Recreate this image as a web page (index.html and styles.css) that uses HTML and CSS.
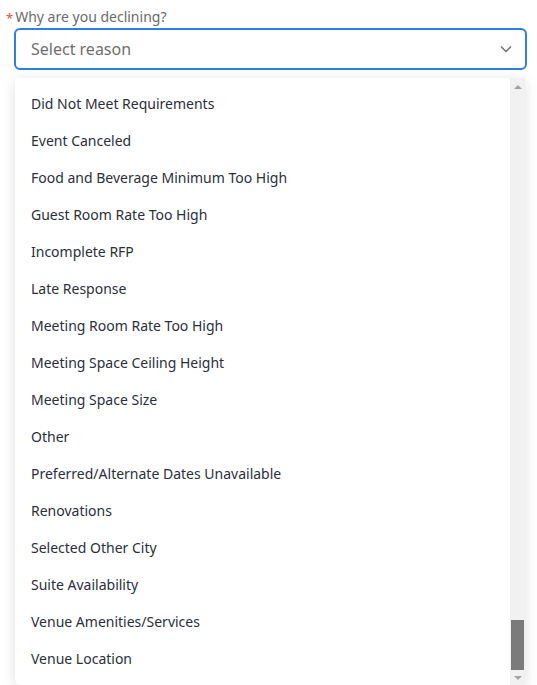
FILE: index.html
```html
<!DOCTYPE html>
<html>
<head>
<meta charset="utf-8">
<link rel="stylesheet" href="styles.css">
</head>
<body>
<div class="field">
  <div class="label"><span class="req">*</span>Why are you declining?</div>
  <div class="select">
    <span class="placeholder">Select reason</span>
    <svg class="chev" width="12" height="8" viewBox="0 0 12 8"><path d="M1 1.5 L6 6.5 L11 1.5" fill="none" stroke="#6e6e6e" stroke-width="1.4"/></svg>
  </div>
  <div class="dropdown">
    <ul class="list">
      <li>Did Not Meet Requirements</li>
      <li>Event Canceled</li>
      <li>Food and Beverage Minimum Too High</li>
      <li>Guest Room Rate Too High</li>
      <li>Incomplete RFP</li>
      <li>Late Response</li>
      <li>Meeting Room Rate Too High</li>
      <li>Meeting Space Ceiling Height</li>
      <li>Meeting Space Size</li>
      <li>Other</li>
      <li>Preferred/Alternate Dates Unavailable</li>
      <li>Renovations</li>
      <li>Selected Other City</li>
      <li>Suite Availability</li>
      <li>Venue Amenities/Services</li>
      <li>Venue Location</li>
    </ul>
    <div class="scrollbar">
      <div class="arrow up"></div>
      <div class="track"><div class="thumb"></div></div>
      <div class="arrow down"></div>
    </div>
  </div>
</div>
</body>
</html>
```
FILE: styles.css
```css
html, body { margin: 0; padding: 0; background: #fff; }
body {
  font-family: "Noto Sans", "Liberation Sans", sans-serif;
  width: 537px;
  height: 685px;
  overflow: hidden;
}
.field { padding: 6px 10px 0 14px; }
.label {
  font-size: 14px;
  color: #6b6b6b;
  line-height: 20px;
  height: 22px;
  margin-left: -8px;
  display: flex;
  align-items: center;
}
.req { color: #e0533a; margin-right: 2px; font-size: 13px; line-height: 13px; position: relative; top: 1px; }
.select {
  box-sizing: border-box;
  height: 42px;
  border: 2px solid #2f7fe0;
  border-radius: 6px;
  display: flex;
  align-items: center;
  justify-content: space-between;
  padding: 0 13px 0 15px;
}
.placeholder { font-size: 16px; color: #6f6f6f; }
.chev { display: block; }
.dropdown {
  margin-top: 8px;
  margin-left: 1px;
  margin-right: 2px;
  height: 607px;
  background: #fff;
  border-radius: 0 0 6px 6px;
  box-shadow: 0 3px 14px rgba(0,0,0,0.13);
  display: flex;
  overflow: hidden;
}
.list {
  list-style: none;
  margin: 0;
  padding: 7px 0 0 0;
  flex: 1;
}
.list li {
  height: 37px;
  line-height: 37px;
  padding-left: 16px;
  font-size: 14px;
  color: #2b2f3a;
}
.scrollbar {
  width: 15px;
  background: #f1f1f1;
  display: flex;
  flex-direction: column;
  align-items: center;
}
.arrow { width: 0; height: 0; border-left: 4px solid transparent; border-right: 4px solid transparent; }
.arrow.up { border-bottom: 4px solid #a3a3a3; margin-top: 7px; margin-bottom: 4px; }
.arrow.down { border-top: 4px solid #a3a3a3; margin-top: 4px; margin-bottom: 5px; }
.track { flex: 1; width: 100%; display: flex; flex-direction: column; justify-content: flex-end; align-items: center; }
.thumb { width: 13px; height: 50px; background: #7b7b7b; margin-bottom: 2px; }
```
